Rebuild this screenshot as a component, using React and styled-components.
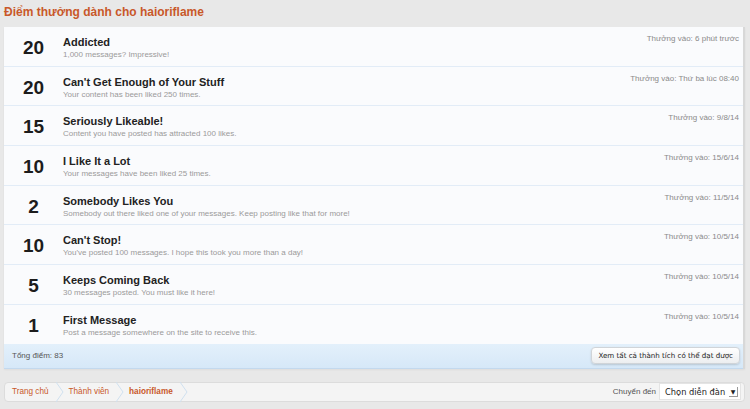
import React from 'react';
import styled, { createGlobalStyle } from 'styled-components';

const GlobalStyle = createGlobalStyle`
  html, body {
    margin: 0;
    padding: 0;
    background: #e8e8e8;
    font-family: "Liberation Sans", Arial, sans-serif;
  }
`;

const Page = styled.div`
  width: 750px;
  height: 409px;
  padding: 5px 5px 0 4px;
  box-sizing: border-box;
  overflow: hidden;
`;

const Heading = styled.h2`
  margin: 0 0 5px 0;
  font-size: 12px;
  font-weight: bold;
  color: #c8582a;
  height: 17px;
  line-height: 15px;
`;

const Panel = styled.div`
  background: #fafbfd;
  border-right: 2px solid #d8d8d8;
  box-shadow: 0 1px 2px rgba(0, 0, 0, 0.05);
`;

const List = styled.ol`
  list-style: none;
  margin: 0;
  padding: 0;
`;

const Row = styled.li`
  display: flex;
  align-items: flex-start;
  height: 38.7px;
  border-bottom: 1px solid #e2ecf7;
  box-sizing: content-box;
  &:last-child {
    border-bottom: none;
  }
`;

const Points = styled.div`
  width: 59px;
  padding-top: 10px;
  text-align: center;
  font-size: 19px;
  font-weight: bold;
  color: #1c1c1c;
`;

const Info = styled.div`
  flex: 1;
  padding-top: 8px;
`;

const Title = styled.h3`
  margin: 0;
  font-size: 11px;
  font-weight: bold;
  color: #222;
  line-height: 14px;
`;

const Desc = styled.div`
  font-size: 8px;
  color: #9a9a9a;
  line-height: 12px;
`;

const Awarded = styled.div`
  padding: 7px 4px 0 0;
  font-size: 8px;
  color: #8a8a8a;
`;

const Footer = styled.div`
  display: flex;
  justify-content: space-between;
  align-items: center;
  height: 24px;
  padding: 0 3px 0 8px;
  background: linear-gradient(#e3f0fb, #d6e8f8);
  border-bottom: 1px solid #c3d9ee;
`;

const Total = styled.span`
  font-size: 8px;
  color: #555;
`;

const Button = styled.button`
  font-family: "DejaVu Sans", sans-serif;
  font-size: 7.1px;
  color: #222;
  height: 17px;
  padding: 0 6px;
  border: 1px solid #d0d4d8;
  border-radius: 4px;
  background: linear-gradient(#ffffff, #eceef0);
  box-shadow: 0 1px 2px rgba(0, 0, 0, 0.15);
`;

const NavBar = styled.div`
  display: flex;
  align-items: center;
  justify-content: space-between;
  margin-top: 13px;
  height: 18px;
  border: 1px solid #dcdcdc;
  border-radius: 4px;
  background: #f4f4f4;
  padding-right: 3px;
`;

const Crumbs = styled.div`
  display: flex;
  align-items: center;
  height: 100%;
`;

const Crumb = styled.a`
  display: flex;
  align-items: center;
  height: 100%;
  padding: 0 0 0 ${(p) => (p.$first ? 7 : 5)}px;
  font-size: 8.2px;
  font-weight: ${(p) => (p.$current ? 'bold' : 'normal')};
  color: #c8582a;
  text-decoration: none;
`;

const Chevron = styled.svg`
  margin-left: 7px;
  display: block;
`;

const JumpTo = styled.div`
  display: flex;
  align-items: center;
  gap: 3px;
  font-size: 8px;
  color: #555;
`;

const Select = styled.div`
  display: flex;
  align-items: center;
  justify-content: space-between;
  width: 82px;
  height: 17px;
  box-sizing: border-box;
  padding: 0 2px 0 5px;
  background: #fff;
  border: 1px solid #e4e4e4;
  font-family: "DejaVu Sans", sans-serif;
  font-size: 8.3px;
  white-space: nowrap;
  color: #222;
`;

const Arrow = styled.span`
  width: 9px;
  height: 10px;
  border-right: 1px solid #999;
  border-bottom: 1px solid #999;
  display: flex;
  align-items: center;
  justify-content: center;
  font-size: 6px;
  color: #222;
  box-sizing: border-box;
`;

const trophies = [
  { pts: 20, title: 'Addicted', desc: '1,000 messages? Impressive!', at: '6 phút trước' },
  { pts: 20, title: "Can't Get Enough of Your Stuff", desc: 'Your content has been liked 250 times.', at: 'Thứ ba lúc 08:40' },
  { pts: 15, title: 'Seriously Likeable!', desc: 'Content you have posted has attracted 100 likes.', at: '9/8/14' },
  { pts: 10, title: 'I Like It a Lot', desc: 'Your messages have been liked 25 times.', at: '15/6/14' },
  { pts: 2, title: 'Somebody Likes You', desc: 'Somebody out there liked one of your messages. Keep posting like that for more!', at: '11/5/14' },
  { pts: 10, title: "Can't Stop!", desc: "You've posted 100 messages. I hope this took you more than a day!", at: '10/5/14' },
  { pts: 5, title: 'Keeps Coming Back', desc: '30 messages posted. You must like it here!', at: '10/5/14' },
  { pts: 1, title: 'First Message', desc: 'Post a message somewhere on the site to receive this.', at: '10/5/14' },
];

const crumbs = ['Trang chủ', 'Thành viên', 'haioriflame'];

const ChevronIcon = () => (
  <Chevron width="8" height="20" viewBox="0 0 8 20">
    <path d="M0 0 L7 10 L0 20" fill="none" stroke="#cfe0ef" strokeWidth="1" />
  </Chevron>
);

const App = () => (
  <>
    <GlobalStyle />
    <Page>
      <Heading>Điểm thưởng dành cho haioriflame</Heading>
      <Panel>
        <List>
          {trophies.map((t, i) => (
            <Row key={i}>
              <Points>{t.pts}</Points>
              <Info>
                <Title>{t.title}</Title>
                <Desc>{t.desc}</Desc>
              </Info>
              <Awarded>Thưởng vào: {t.at}</Awarded>
            </Row>
          ))}
        </List>
        <Footer>
          <Total>Tổng điểm: 83</Total>
          <Button>Xem tất cả thành tích có thể đạt được</Button>
        </Footer>
      </Panel>
      <NavBar>
        <Crumbs>
          {crumbs.map((c, i) => (
            <Crumb key={c} href="#" $first={i === 0} $current={i === crumbs.length - 1}>
              {c}
              <ChevronIcon />
            </Crumb>
          ))}
        </Crumbs>
        <JumpTo>
          Chuyển đến
          <Select>
            Chọn diễn đàn
            <Arrow>▼</Arrow>
          </Select>
        </JumpTo>
      </NavBar>
    </Page>
  </>
);

export default App;
